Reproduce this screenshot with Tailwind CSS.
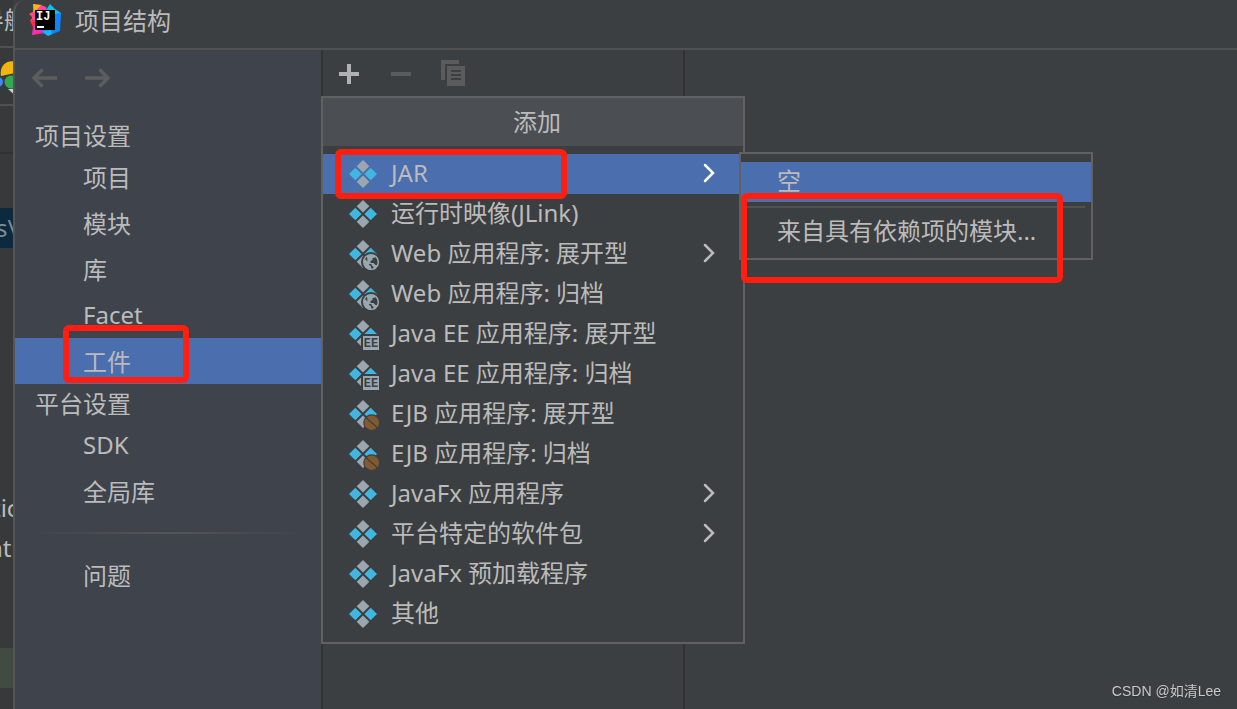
<!DOCTYPE html>
<html lang="zh-CN">

<head>
  <meta charset="UTF-8" />
  <meta name="viewport" content="width=device-width, initial-scale=1.0" />
  <title>项目结构</title>
  <script src="https://cdn.jsdelivr.net/npm/@tailwindcss/browser@4"></script>
</head>

<body class="flex min-h-screen overflow-hidden bg-[#3c3f41] font-['Noto_Sans','Noto_Sans_CJK_SC',sans-serif] text-2xl font-normal text-[#bbbbbb]">
  <!-- Icon shapes -->
  <svg class="hidden" aria-hidden="true">
    <symbol id="artifact" viewBox="0 0 32 32">
      <path fill="#9aa7b0" d="M16 2l6.300 6.300L16 14.600 9.700 8.300zM16 17.400l6.300 6.300L16 30 9.700 23.700z" />
      <path fill="#40b6e0" d="M8.300 9.700l6.300 6.300-6.300 6.300L2 16zM23.700 9.700L30 16l-6.300 6.300-6.300-6.300z" />
    </symbol>
    <symbol id="artifact-web" viewBox="0 0 32 32">
      <use href="#artifact" />
      <circle cx="24" cy="24" r="10" fill="#3c3f41" />
      <circle cx="24" cy="24" r="7.300" fill="none" stroke="#9aa7b0" stroke-width="1.500" />
      <path fill="#9aa7b0" d="M17 20l5 5v2l2 1v4c-4 0-8-4-7-12zM20 18l4-1.500 4 1 .5 2-3 .5v2l-2 1v2h3l2 2h2l-2 4-2 1v-3l-2-2v-1h-2l-2-2z" />
    </symbol>
    <symbol id="artifact-ee" viewBox="0 0 32 32">
      <use href="#artifact" />
      <path fill="#3c3f41" d="M14 16h18v16H14z" />
      <path fill="#9aa7b0" d="M16 18h16v14H16z" />
      <text x="24" y="29" fill="#3c3f41" text-anchor="middle" font-family="Liberation Mono" font-size="12" font-weight="700">EE</text>
    </symbol>
    <symbol id="artifact-ejb" viewBox="0 0 32 32">
      <use href="#artifact" />
      <circle cx="24.700" cy="24.700" r="8.500" fill="#3c3f41" />
      <circle cx="24.700" cy="24.700" r="7.300" fill="#825a2f" />
      <path fill="none" stroke="#3c3f41" stroke-width="1.300" d="M19 19c2 4 9 7 11.500 11.500" />
    </symbol>
    <symbol id="chevron" viewBox="0 0 24 24">
      <path fill="none" stroke="currentColor" stroke-width="2.500" stroke-linecap="round" d="M8 3l8 8-8 8" />
    </symbol>
  </svg>

  <!-- Editor behind the dialog -->
  <aside class="flex w-[13px] shrink-0 flex-col overflow-hidden bg-[#373a3b] whitespace-nowrap">
    <div class="-ml-5 flex h-12 items-center border-b-2 border-[#515151] pb-1.5">导航</div>
    <div class="flex h-[58px] items-center border-b-2 border-[#515151]">
      <svg class="h-9 w-4 shrink-0" viewBox="0 0 16 36">
        <path fill="#f2b50b" d="M1 18C-1 8 7 1 16 4V15z" />
        <circle cx="-2" cy="24" r="5" fill="#4285f4" />
        <circle cx="11" cy="24" r="6.500" fill="#34a853" />
        <path fill="#d0d0d0" d="M8 31h8v7z" />
      </svg>
    </div>
    <div class="h-12 border-b-2 border-[#2f3132]"></div>
    <div class="mt-[54px] flex h-10 items-center bg-[#0d293e] text-[#7d8b94]"><span class="-ml-1">s\</span></div>
    <div class="mt-60 -ml-2 flex h-10 items-center">tic</div>
    <div class="-ml-3 flex h-10 items-center">nt</div>
    <div class="mt-20 h-10 bg-[#414b41]"></div>
  </aside>

  <div class="flex min-w-0 grow flex-col rounded-tl-xl border-l-2 border-[#555555] bg-[#3c3f41]">
    <header class="flex h-[50px] items-center gap-[14px] border-b-2 border-[#515151] pb-2 pl-[14px]">
      <svg class="size-8" viewBox="0 0 32 32">
        <path fill="#fc801d" d="M4 0l8 2 6 10L6 18 1 17l3-4-4-3 4-2z" />
        <path fill="#fe2857" d="M1 17l11-8 6 20-15 2 1-8z" />
        <path fill="#fdb60d" d="M4 0l9 1-7 8z" />
        <path fill="#ff45a0" d="M12 1l5 2 1 5-13 9-4-7 5-2z" />
        <path fill="#f42fc0" d="M3 31l3-11 11 6-7 3z" />
        <path fill="#07c3f2" d="M17 6l4-6 5 5 6 4-3 12-11 1z" />
        <path fill="#0a86fa" d="M25 10l7-1-1 18-12 5-7-4 9-7z" />
        <path fill="#19b5f5" d="M13 27l9-1 1 4-4 2z" />
        <path fill="#000000" d="M6 6h20v20H6z" />
        <text x="7" y="16" fill="#ffffff" font-family="Liberation Mono" font-size="12" font-weight="700">IJ</text>
        <path fill="#ffffff" d="M8 22h7v2H8z" />
      </svg>
      <h1 class="pt-0.5">项目结构</h1>
    </header>

    <div class="relative flex grow">
      <!-- Sidebar -->
      <nav class="w-[306px] shrink-0 bg-[#3e434c]">
        <div class="mb-[10px] flex h-14 items-center gap-7 pl-4 text-[#5d5d5d]">
          <button aria-label="后退">
            <svg class="h-5 w-[26px]" viewBox="0 0 26 20" fill="none" stroke="currentColor" stroke-width="3.500">
              <path d="M26 10H3M11.500 1.500L3 10l8.500 8.500" />
            </svg>
          </button>
          <button aria-label="前进">
            <svg class="h-5 w-[26px]" viewBox="0 0 26 20" fill="none" stroke="currentColor" stroke-width="3.500">
              <path d="M0 10h23M14.500 1.500L23 10l-8.500 8.500" />
            </svg>
          </button>
        </div>
        <h2 class="flex h-[38px] items-center pt-0.5 pl-5">项目设置</h2>
        <a href="#" class="flex h-[46px] items-center pt-0.5 pl-[68px]">项目</a>
        <a href="#" class="flex h-[46px] items-center pt-0.5 pl-[68px]">模块</a>
        <a href="#" class="flex h-[46px] items-center pt-0.5 pl-[68px]">库</a>
        <a href="#" class="flex h-[46px] items-center pl-[68px]">Facet</a>
        <a href="#" class="relative flex h-[46px] items-center bg-[#4b6eaf] pt-0.5 pl-[68px]">工件
          <span class="absolute -top-[13px] left-12 h-[58px] w-[126px] rounded-md border-6 border-[#ff1e10]"></span>
        </a>
        <h2 class="flex h-[38px] items-center pt-0.5 pl-5">平台设置</h2>
        <a href="#" class="flex h-[46px] items-center pl-[68px]">SDK</a>
        <a href="#" class="flex h-[46px] items-center pt-0.5 pl-[68px]">全局库</a>
        <div class="mx-3 my-[18px] h-0.5 bg-linear-to-r from-transparent via-[#555555] to-transparent"></div>
        <a href="#" class="flex h-[46px] items-center pt-0.5 pl-[68px]">问题</a>
      </nav>

      <!-- Artifact list -->
      <section class="w-[364px] shrink-0 border-x-2 border-[#323232]">
        <div class="flex h-12 items-center gap-5 pl-[10px] text-[#5b5b5b]">
          <button aria-label="添加" class="flex w-8 justify-center text-[#afb1b3]">
            <svg class="size-5" viewBox="0 0 20 20" fill="currentColor">
              <path d="M8 0h4v8h8v4h-8v8H8v-8H0V8h8z" />
            </svg>
          </button>
          <button aria-label="移除" class="flex w-8 justify-center">
            <svg class="size-5" viewBox="0 0 20 20" fill="currentColor">
              <path d="M0 8h20v4H0z" />
            </svg>
          </button>
          <button aria-label="复制" class="flex w-8 justify-center">
            <svg class="h-7 w-6" viewBox="0 0 24 28" fill="currentColor" fill-rule="evenodd">
              <path d="M0 0h18v4H4v16H0zM6 6h18v20H6zM10 10v2h10v-2zM10 14v2h10v-2zM10 18v2h10v-2z" />
            </svg>
          </button>
        </div>
      </section>

      <!-- Add menu -->
      <div class="absolute top-[46px] left-[306px] w-[424px] border-2 border-[#616161] bg-[#3c3f41]">
        <h2 class="flex h-12 items-center justify-center bg-[#4b4e52] pl-2">添加</h2>
        <ul class="py-2">
          <li class="relative">
            <button class="flex h-10 w-full items-center gap-3 bg-[#4b6eaf] pr-[22px] pl-6">
              <svg class="size-8"><use href="#artifact" /></svg><span class="pb-0.5">JAR</span>
              <svg class="ml-auto size-6 text-white"><use href="#chevron" /></svg>
            </button>
            <span class="absolute -top-[5px] left-3 h-[50px] w-[232px] rounded-md border-6 border-[#ff1e10]"></span>
            <div class="absolute -top-0.5 left-[416px] w-[354px] border-2 border-[#616161] bg-[#3c3f41] pt-2 pb-[6px]">
              <button class="flex h-10 w-full items-center bg-[#4b6eaf] pl-9"><span class="pb-0.5">空</span></button>
              <hr class="mx-[6px] my-1 border-t-2 border-[#515151]" />
              <div class="relative">
                <button class="flex h-10 w-full items-center pl-9"><span class="pb-0.5">来自具有依赖项的模块...</span></button>
                <span class="absolute -top-[19px] left-0 h-[90px] w-[322px] rounded-md border-6 border-[#ff1e10]"></span>
              </div>
            </div>
          </li>
          <li>
            <button class="flex h-10 w-full items-center gap-3 pr-[22px] pl-6">
              <svg class="size-8"><use href="#artifact" /></svg><span class="pb-0.5">运行时映像(JLink)</span>
            </button>
          </li>
          <li>
            <button class="flex h-10 w-full items-center gap-3 pr-[22px] pl-6">
              <svg class="size-8"><use href="#artifact-web" /></svg><span class="pb-0.5">Web 应用程序: 展开型</span>
              <svg class="ml-auto size-6"><use href="#chevron" /></svg>
            </button>
          </li>
          <li>
            <button class="flex h-10 w-full items-center gap-3 pr-[22px] pl-6">
              <svg class="size-8"><use href="#artifact-web" /></svg><span class="pb-0.5">Web 应用程序: 归档</span>
            </button>
          </li>
          <li>
            <button class="flex h-10 w-full items-center gap-3 pr-[22px] pl-6">
              <svg class="size-8"><use href="#artifact-ee" /></svg><span class="pb-0.5">Java EE 应用程序: 展开型</span>
            </button>
          </li>
          <li>
            <button class="flex h-10 w-full items-center gap-3 pr-[22px] pl-6">
              <svg class="size-8"><use href="#artifact-ee" /></svg><span class="pb-0.5">Java EE 应用程序: 归档</span>
            </button>
          </li>
          <li>
            <button class="flex h-10 w-full items-center gap-3 pr-[22px] pl-6">
              <svg class="size-8"><use href="#artifact-ejb" /></svg><span class="pb-0.5">EJB 应用程序: 展开型</span>
            </button>
          </li>
          <li>
            <button class="flex h-10 w-full items-center gap-3 pr-[22px] pl-6">
              <svg class="size-8"><use href="#artifact-ejb" /></svg><span class="pb-0.5">EJB 应用程序: 归档</span>
            </button>
          </li>
          <li>
            <button class="flex h-10 w-full items-center gap-3 pr-[22px] pl-6">
              <svg class="size-8"><use href="#artifact" /></svg><span class="pb-0.5">JavaFx 应用程序</span>
              <svg class="ml-auto size-6"><use href="#chevron" /></svg>
            </button>
          </li>
          <li>
            <button class="flex h-10 w-full items-center gap-3 pr-[22px] pl-6">
              <svg class="size-8"><use href="#artifact" /></svg><span class="pb-0.5">平台特定的软件包</span>
              <svg class="ml-auto size-6"><use href="#chevron" /></svg>
            </button>
          </li>
          <li>
            <button class="flex h-10 w-full items-center gap-3 pr-[22px] pl-6">
              <svg class="size-8"><use href="#artifact" /></svg><span class="pb-0.5">JavaFx 预加载程序</span>
            </button>
          </li>
          <li>
            <button class="flex h-10 w-full items-center gap-3 pr-[22px] pl-6">
              <svg class="size-8"><use href="#artifact" /></svg><span class="pb-0.5">其他</span>
            </button>
          </li>
        </ul>
      </div>
    </div>
  </div>

  <p class="fixed right-4 bottom-2 font-['Liberation_Sans','Noto_Sans_CJK_SC',sans-serif] text-sm text-[#c8c8c8] text-shadow-xs">CSDN @如清Lee</p>
</body>

</html>
